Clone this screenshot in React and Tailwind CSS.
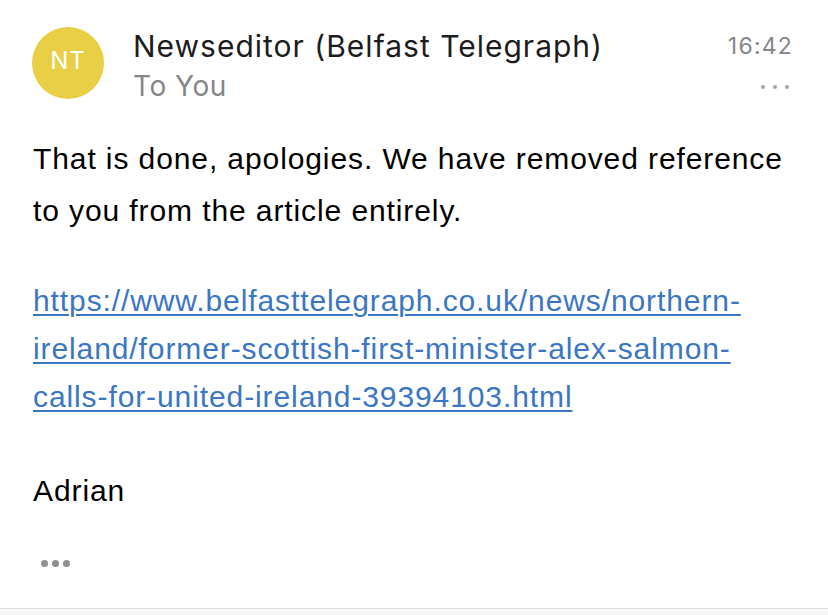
export default function App() {
  return (
    <div className="w-[828px] h-[615px] bg-white flex flex-col overflow-hidden">
      <div className="flex-1 flex flex-col">
        {/* header */}
        <div className="flex pt-[27px] pl-[32px] pr-[35px]">
          <div className="w-[72px] h-[72px] rounded-full bg-[#e9cf45] flex items-center justify-center text-white text-[24px] tracking-[1px] font-['Inter',sans-serif] shrink-0 pb-[4px]">
            NT
          </div>
          <div className="flex-1 ml-[29px] font-['Inter',sans-serif]">
            <div className="flex justify-between items-start">
              <div className="text-[30px] tracking-[1px] text-[#1c1c1e] leading-[38px]">Newseditor (Belfast Telegraph)</div>
              <div className="text-[23px] tracking-[1.2px] text-[#86868a] leading-[38px]">16:42</div>
            </div>
            <div className="flex justify-between items-center mt-[2px]">
              <div className="text-[28px] tracking-[0.5px] text-[#86868a] leading-[38px]">To You</div>
              <div className="flex gap-[8px] pr-[4px] pt-[2px]">
                <span className="w-[4px] h-[4px] rounded-full bg-[#a3a3a8]" />
                <span className="w-[4px] h-[4px] rounded-full bg-[#a3a3a8]" />
                <span className="w-[4px] h-[4px] rounded-full bg-[#a3a3a8]" />
              </div>
            </div>
          </div>
        </div>

        {/* body */}
        <div className="pl-[33px] pt-[28px] font-['Liberation_Sans',Arial,sans-serif] text-[30px] tracking-[0.9px] text-black w-[800px]">
          <p className="leading-[52px]">
            That is done, apologies. We have removed reference to you from the article entirely.
          </p>
          <div className="h-[40px]" />
          <a className="block leading-[48px] text-[#3a76c4] underline underline-offset-[3px] decoration-[2px]">
            https://www.belfasttelegraph.co.uk/news/northern-ireland/former-scottish-first-minister-alex-salmon-calls-for-united-ireland-39394103.html
          </a>
          <div className="h-[46px]" />
          <p className="leading-[48px]">Adrian</p>
          <div className="flex gap-[4px] mt-[45px] ml-[8px]">
            <span className="w-[7px] h-[7px] rounded-full bg-[#8e8e93]" />
            <span className="w-[7px] h-[7px] rounded-full bg-[#8e8e93]" />
            <span className="w-[7px] h-[7px] rounded-full bg-[#8e8e93]" />
          </div>
        </div>
      </div>
      <div className="h-[7px] border-t border-[#dcdcdc] bg-[#f6f6f6]" />
    </div>
  );
}
